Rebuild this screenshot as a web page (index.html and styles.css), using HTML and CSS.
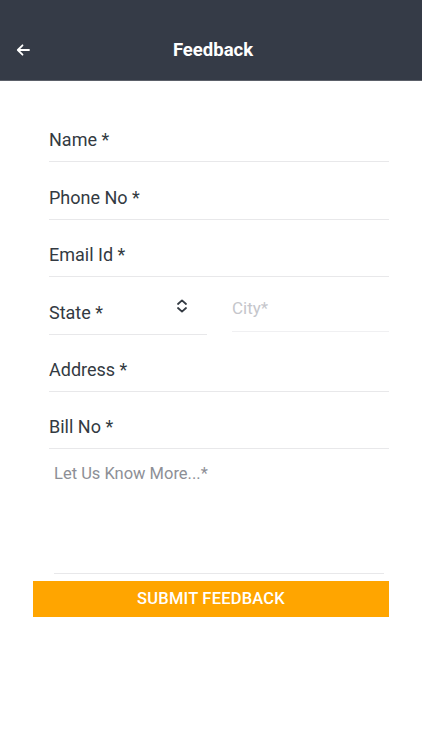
FILE: index.html
```html
<!DOCTYPE html>
<html>
	<head>
		<meta charset="utf-8">
		<title>Feedback</title>
		<link rel="stylesheet" href="styles.css">
	</head>
	<body>
		<div class="header">
			<span class="back">
				<svg width="14" height="12" viewBox="0 0 14 12">
					<path d="M13 6H2M6.5 1.3L1.8 6l4.7 4.7" fill="none" stroke="#fff" stroke-width="1.8" stroke-linecap="round" stroke-linejoin="round"/>
				</svg>
			</span>
			<span class="title">Feedback</span>
		</div>

		<div class="form">
			<div class="field">Name *</div>
			<div class="field">Phone No *</div>
			<div class="field">Email Id *</div>
			<div class="row">
				<div class="field state">
					<span>State *</span>
					<svg class="chev" width="12" height="14" viewBox="0 0 12 14">
						<path d="M2 5l4-3.6L10 5M2 9l4 3.6L10 9" fill="none" stroke="#333a42" stroke-width="1.8" stroke-linecap="round" stroke-linejoin="round"/>
					</svg>
				</div>
				<div class="field city">City*</div>
			</div>
			<div class="field">Address *</div>
			<div class="field">Bill No *</div>
			<div class="more">Let Us Know More...*</div>
			<div class="submit">SUBMIT FEEDBACK</div>
		</div>
	</body>
</html>
```

FILE: styles.css
```css
*{
	margin: 0;padding: 0;
	box-sizing: border-box;
}
body{
	font-family: Roboto, "Liberation Sans", sans-serif;
	background: #fff;
	color: #333a42;
}
.header{
	height: 81px;
	padding: 20px 0 0 4px;
	background: #353b47;
	border-bottom: 1px solid #5b6069;
	display: flex;
	align-items: center;
	justify-content: center;
	position: relative;
}
.back{
	position: absolute;
	left: 16px;
	top: 44px;
	display: flex;
}
.title{
	color: #fff;
	font-size: 18.5px;
	font-weight: 700;
	line-height: 20px;
	padding-bottom: 1px;
}
.form{
	width: 389px;
	padding: 24px 0 0 49px;
}
.field{
	height: 57.4px;
	padding-bottom: 11px;
	border-bottom: 1px solid #e8e8ea;
	display: flex;
	align-items: flex-end;
	font-size: 18px;
	line-height: 20px;
}
.row{
	display: flex;
	align-items: flex-start;
	gap: 25px;
}
.state{
	width: 158px;
	justify-content: space-between;
}
.chev{
	margin: 0 19px 10px 0;
}
.city{
	flex: 1;
	height: 55px;
	padding-bottom: 13px;
	font-size: 17px;
	color: #c5c6cb;
	border-bottom-color: #f0f0f2;
}
.more{
	height: 125px;
	margin: 0 5px;
	padding-top: 15px;
	font-size: 16.5px;
	line-height: 20px;
	color: #8d8f96;
	border-bottom: 1px solid #e8e8ea;
}
.submit{
	margin: 7px 0 0 -16px;
	height: 36px;
	background: #ffa500;
	color: #fff;
	font-size: 16.5px;
	font-weight: 500;
	line-height: 36px;
	text-align: center;
	letter-spacing: 0.2px;
}
```
